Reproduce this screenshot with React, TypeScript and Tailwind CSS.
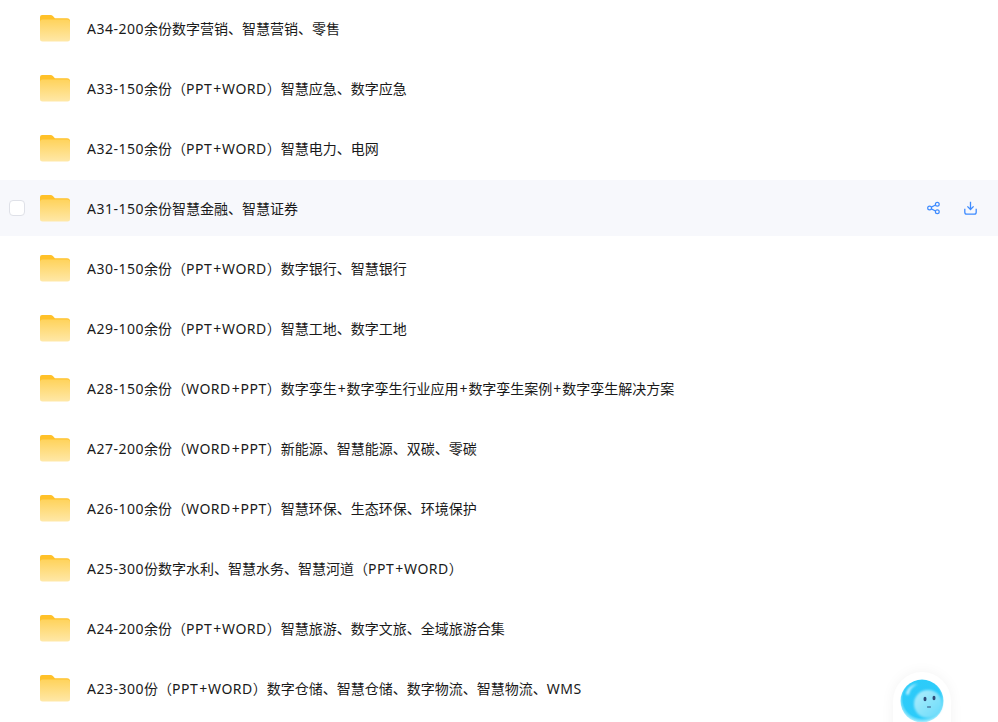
import { useId } from "react";

const folders = [
  "A34-200余份数字营销、智慧营销、零售",
  "A33-150余份（PPT+WORD）智慧应急、数字应急",
  "A32-150余份（PPT+WORD）智慧电力、电网",
  "A31-150余份智慧金融、智慧证券",
  "A30-150余份（PPT+WORD）数字银行、智慧银行",
  "A29-100余份（PPT+WORD）智慧工地、数字工地",
  "A28-150余份（WORD+PPT）数字孪生+数字孪生行业应用+数字孪生案例+数字孪生解决方案",
  "A27-200余份（WORD+PPT）新能源、智慧能源、双碳、零碳",
  "A26-100余份（WORD+PPT）智慧环保、生态环保、环境保护",
  "A25-300份数字水利、智慧水务、智慧河道（PPT+WORD）",
  "A24-200余份（PPT+WORD）智慧旅游、数字文旅、全域旅游合集",
  "A23-300份（PPT+WORD）数字仓储、智慧仓储、数字物流、智慧物流、WMS",
];

// latin runs and the plus sign are a bit wider in the original font
function FolderName({ name }: { name: string }) {
  const parts = name.split(/([A-Za-z0-9-]+|\+)/);
  return (
    <span className="ml-[17px] flex-1 whitespace-nowrap">
      {parts.map((part, i) => {
        if (i % 2 === 0) return part;
        return (
          <span key={i} className={part === "+" ? "mx-[0.9px]" : "tracking-[0.5px]"}>
            {part}
          </span>
        );
      })}
    </span>
  );
}

function FolderIcon() {
  const id = useId();
  return (
    <svg width="30" height="28" viewBox="0 0 30 28" className="shrink-0">
      <defs>
        <linearGradient id={id} x1="0" y1="0" x2="0" y2="1">
          <stop offset="0" stopColor="#ffd35c" />
          <stop offset="1" stopColor="#ffe8a8" />
        </linearGradient>
      </defs>
      <path
        d="M2 1h8.500c1 0 1.700.3 2.400 1l2 2.200H27a3 3 0 0 1 3 3V12H0V3a2 2 0 0 1 2-2z"
        fill="#ffc129"
      />
      <path
        d="M2.500 5.600h25a2.500 2.500 0 0 1 2.500 2.500V25a2.500 2.500 0 0 1-2.500 2.500h-25A2.500 2.500 0 0 1 0 25V8.100a2.500 2.500 0 0 1 2.500-2.500z"
        fill={`url(#${id})`}
      />
    </svg>
  );
}

function ShareIcon() {
  return (
    <svg width="13" height="14" viewBox="0 0 13 14" fill="none" stroke="#3e8bff" strokeWidth="1.2">
      <circle cx="2.600" cy="7" r="1.900" />
      <circle cx="10.300" cy="3.200" r="1.900" />
      <circle cx="10.300" cy="10.800" r="1.900" />
      <path d="M4.300 6.100 8.600 4M4.300 7.900 8.600 10" />
    </svg>
  );
}

function DownloadIcon() {
  return (
    <svg width="13" height="14" viewBox="0 0 13 14" fill="none" stroke="#3e8bff" strokeWidth="1.3">
      <path d="M6.500 .8v7.400M3.400 5.400l3.100 3.100 3.100-3.100" />
      <path d="M.8 7.800v3.400a1.900 1.900 0 0 0 1.900 1.900h7.600a1.900 1.900 0 0 0 1.900-1.900V7.800" />
    </svg>
  );
}

function Mascot() {
  return (
    <svg width="46" height="46" viewBox="0 0 46 46">
      <defs>
        <radialGradient id="ball" cx="0.5" cy="0.45" r="0.55">
          <stop offset="0" stopColor="#2fc8f8" />
          <stop offset="0.8" stopColor="#2cccfa" />
          <stop offset="1" stopColor="#b5f0fd" />
        </radialGradient>
        <linearGradient id="face" x1="0" y1="0" x2="1" y2="1">
          <stop offset="0" stopColor="#b0eefd" />
          <stop offset="1" stopColor="#66dafa" />
        </linearGradient>
        <filter id="soft" x="-20%" y="-20%" width="140%" height="140%">
          <feGaussianBlur stdDeviation="0.8" />
        </filter>
      </defs>
      <circle cx="23" cy="23" r="21.500" fill="url(#ball)" />
      <path d="M7 15c2-6 7-9 12-9-5 2-8 5-9 10-1 1.500-3 1-3-1z" fill="#d5f6fe" opacity="0.85" filter="url(#soft)" />
      <ellipse cx="29" cy="26" rx="14" ry="14" fill="url(#face)" filter="url(#soft)" />
      <ellipse cx="26" cy="21" rx="1.500" ry="2.200" fill="#2f4a78" />
      <ellipse cx="35" cy="20" rx="1.500" ry="2.200" fill="#2f4a78" />
      <path d="M28.500 29h3" stroke="#2f4a78" strokeWidth="1" strokeLinecap="round" />
    </svg>
  );
}

export default function App() {
  return (
    <div className="relative h-[722px] w-[998px] overflow-hidden bg-white font-['Noto_Sans','Noto_Sans_CJK_SC',sans-serif] text-[14px] text-[#1a1a1a]">
      <ul className="flex flex-col gap-1">
        {folders.map((name, i) => {
          const hovered = i === 3;
          return (
            <li
              key={name}
              className={`flex h-14 shrink-0 items-center ${hovered ? "bg-[#f7f8fc]" : ""}`}
            >
              <div className="flex w-10 shrink-0 pl-[9px]">
                {hovered && (
                  <span className="h-4 w-4 rounded-[4px] border border-[#dfe1e8] bg-white" />
                )}
              </div>
              <FolderIcon />
              <FolderName name={name} />
              {hovered && (
                <div className="flex items-center gap-[24px] pr-[21px]">
                  <ShareIcon />
                  <DownloadIcon />
                </div>
              )}
            </li>
          );
        })}
      </ul>
      <div className="absolute left-[893px] top-[672px] flex h-[70px] w-[58px] justify-center rounded-t-[29px] bg-white pt-[6px] shadow-[0_0_14px_rgba(0,0,0,0.05)]">
        <Mascot />
      </div>
    </div>
  );
}
